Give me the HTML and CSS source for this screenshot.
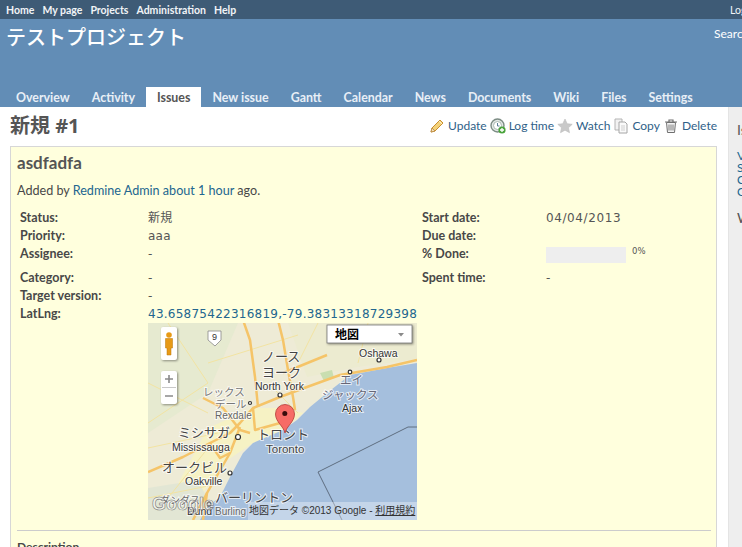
FILE: index.html
```html
<!DOCTYPE html>
<html lang="en">

<head>
    <meta charset="UTF-8">
    <title>新規 #1 - テストプロジェクト</title>
    <link rel="stylesheet" href="styles.css">
</head>

<body>
    <div id="top-menu">
        <ul class="top-links">
            <li>Home</li>
            <li>My page</li>
            <li>Projects</li>
            <li>Administration</li>
            <li>Help</li>
        </ul>
        <span class="account">Logged in as admin</span>
    </div>
    <div id="header">
        <div class="header-row">
            <h1>テストプロジェクト</h1>
            <span class="search">Search:</span>
        </div>
        <ul id="main-menu">
            <li>Overview</li>
            <li>Activity</li>
            <li class="active">Issues</li>
            <li>New issue</li>
            <li>Gantt</li>
            <li>Calendar</li>
            <li>News</li>
            <li>Documents</li>
            <li>Wiki</li>
            <li>Files</li>
            <li>Settings</li>
        </ul>
    </div>
    <div id="main">
        <div id="content">
            <div class="title-row">
                <h2>新規 #1</h2>
                <div class="contextual">
                    <a href="#">
                        <svg class="icon" viewBox="0 0 16 16">
                            <path d="M2 14l1-4 8-8 3 3-8 8z" fill="#f4d27a" stroke="#c98f2e" stroke-width="1" />
                            <path d="M2 14l1-4 3 3z" fill="#f6e3c0" stroke="#b9863c" stroke-width=".8" />
                            <path d="M10 3l3 3" stroke="#fff2c4" stroke-width="1" />
                        </svg>Update</a>
                    <a href="#">
                        <svg class="icon" viewBox="0 0 16 16">
                            <circle cx="7.5" cy="7.5" r="6.5" fill="#e4e9e6" stroke="#7c8c84" stroke-width="1.4" />
                            <circle cx="7.5" cy="7.5" r="4" fill="#fff" stroke="#a9b8b0" />
                            <path d="M7.5 5v3h2" fill="none" stroke="#5e7f95" />
                            <circle cx="12" cy="12" r="3.6" fill="#4aa43c" />
                            <path d="M10 12h4M12 10v4" stroke="#fff" stroke-width="1.3" />
                        </svg>Log time</a>
                    <a href="#">
                        <svg class="icon" viewBox="0 0 16 16">
                            <path d="M8 1l2.2 4.7 5 .6-3.7 3.4 1 5L8 12.2 3.500 14.700l1-5L.8 6.300l5-.6z" fill="#c9c9c9" stroke="#bdbdbd" stroke-width=".6" />
                        </svg>Watch</a>
                    <a href="#">
                        <svg class="icon" viewBox="0 0 16 16">
                            <path d="M2 1h7v11H2z" fill="#f2f2f2" stroke="#b4b4b4" />
                            <path d="M6 4h6l2 2v9H6z" fill="#fafafa" stroke="#a6a6a6" />
                            <path d="M8 8h4M8 10h4M8 12h4" stroke="#cfcfcf" />
                        </svg>Copy</a>
                    <a href="#">
                        <svg class="icon" viewBox="0 0 16 16">
                            <path d="M2 4h12M6 4V2h4v2" fill="none" stroke="#6f6f6f" stroke-width="1.200" />
                            <path d="M3.500 4.500l1 10h7l1-10z" fill="#f4f4f4" stroke="#6f6f6f" />
                            <path d="M6 6.500v6M8 6.500v6M10 6.500v6" stroke="#7d7d7d" />
                        </svg>Delete</a>
                </div>
            </div>
            <div class="issue">
                <h3>asdfadfa</h3>
                <p class="author">Added by <a href="#">Redmine Admin</a> <a href="#">about 1 hour</a> ago.</p>
                <div class="attributes">
                    <div class="label">Status:</div>
                    <div class="value">新規</div>
                    <div class="label">Start date:</div>
                    <div class="value date">04/04/2013</div>

                    <div class="label">Priority:</div>
                    <div class="value">aaa</div>
                    <div class="label">Due date:</div>
                    <div class="value"></div>

                    <div class="label">Assignee:</div>
                    <div class="value">-</div>
                    <div class="label">% Done:</div>
                    <div class="value progress">
                        <div class="bar"></div>
                        <span class="pct">0%</span>
                    </div>

                    <div class="label">Category:</div>
                    <div class="value">-</div>
                    <div class="label">Spent time:</div>
                    <div class="value">-</div>

                    <div class="label">Target version:</div>
                    <div class="value wide">-</div>

                    <div class="label">LatLng:</div>
                    <div class="value wide"><a href="#">43.65875422316819,-79.38313318729398</a></div>
                </div>
                <div class="map-row">
                    <svg class="map" viewBox="0 0 269 197">
                        <rect width="269" height="197" fill="#eeebd6" />
                        <!-- green patches -->
                        <path d="M0 0h90L60 70 0 110z" fill="#e6ead0" />
                        <path d="M140 0h129v36l-60 8-50 10z" fill="#ecebd0" />
                        <path d="M60 105l45-20 30 0 20 5-20 17-30 13-30 20-20 30-30 0z" fill="#f6f2c4" />
                        <path d="M172 50l12-3 2 8-10 3z" fill="#c9deb0" />
                        <path d="M0 165l50-8 10 20-8 20H0z" fill="#e2e6d4" />
                        <!-- minor roads -->
                        <g fill="none" stroke="#f2e3a2" stroke-width="1">
                            <path d="M0 60l60 30M20 0l40 60M60 40l90-28M170 0l-20 40M220 0l-10 40M0 100l60-40" />
                            <path d="M0 125l70-15M20 175l40-50M120 60l30 30M0 175l60-12" />
                        </g>
                        <!-- lake -->
                        <path d="M269 40L239 45 202 52 179 70 162 84 149 97 135 107 105 120 95 130 82 154 72 174 59 184 52 197H269z" fill="#a5bfdd" />
                        <path d="M269 104h-9l-90 45 24 48" fill="none" stroke="#5f6e80" stroke-width="1" />
                        <!-- highways -->
                        <g fill="none" stroke="#f5c468" stroke-width="2.500" stroke-linejoin="round">
                            <path d="M0 149L35 134 62 120 82 110 92 100 105 85 132 74 159 64 192 52 239 44 269 37" />
                            <path d="M95 -3L102 17 107 54 110 84" />
                            <path d="M130 -3L135 17 140 47 145 74 147 87" />
                            <path d="M55 75L75 85 92 107 102 110" />
                            <path d="M92 104L82 130 59 170 55 197" />
                            <path d="M105 85L107 107 132 100" />
                            <path d="M135 50L179 32" />
                            <path d="M62 120L72 135 82 130M45 197L59 170" />
                        </g>
                        <!-- shield -->
                        <path d="M60 8h13v9l-6 6-7-6z" fill="#fff" stroke="#888" stroke-width=".8" />
                        <text class="t-small" x="64" y="17">9</text>
                        <!-- place names -->
                        <g class="halo">
                            <text class="t-jp" x="114" y="38">ノース</text>
                            <text class="t-jp" x="114" y="54">ヨーク</text>
                            <text class="t-en" x="107" y="67">North York</text>
                            <text class="t-jp-soft" x="55" y="73">レックス</text>
                            <text class="t-jp-soft" x="67" y="85">デール</text>
                            <text class="t-en-soft" x="67" y="96">Rexdale</text>
                            <text class="t-jp" x="30" y="114">ミシサガ</text>
                            <text class="t-en" x="24" y="128">Mississauga</text>
                            <text class="t-jp" x="14" y="149">オークビル</text>
                            <text class="t-en" x="37" y="162">Oakville</text>
                            <text class="t-jp" x="109" y="116">トロント</text>
                            <text class="t-toronto" x="118" y="130">Toronto</text>
                            <text class="t-jp-lake" x="192" y="61">エイ</text>
                            <text class="t-jp-lake" x="174" y="76">ジャックス</text>
                            <text class="t-en" x="194" y="89">Ajax</text>
                            <text class="t-en" x="211" y="34">Oshawa</text>
                            <text class="t-jp" x="67" y="179">バーリントン</text>
                            <text class="t-en" x="39" y="192">Dund</text>
                            <text class="t-en-soft" x="67" y="192">Burling</text>
                            <text class="t-jp-small" x="12" y="181">ダンダス</text>
                        </g>
                        <!-- city dots -->
                        <g fill="#fff" stroke="#333" stroke-width="1.200">
                            <circle cx="90" cy="114" r="2.500" />
                            <circle cx="82" cy="150" r="2" />
                            <circle cx="132" cy="72" r="2" />
                            <circle cx="231" cy="37" r="2" />
                            <circle cx="202" cy="49" r="1.800" />
                            <circle cx="102" cy="80" r="1.500" />
                            <circle cx="61" cy="181" r="2" />
                        </g>
                        <!-- attribution -->
                        <rect x="100" y="179" width="169" height="18" fill="#fff" opacity=".35" />
                        <text class="t-attr" x="101" y="191">地図データ ©2013 Google - <tspan text-decoration="underline">利用規約</tspan></text>
                        <text class="t-google" x="4" y="187">Google</text>
                        <!-- marker -->
                        <path d="M137 110c-1.500-7-9.500-11-9.500-19a9.500 9.500 0 0 1 19 0c0 8-8 12-9.500 19z" fill="#f76c66" stroke="#b33a36" stroke-width=".8" />
                        <circle cx="136.800" cy="90.500" r="2.500" fill="#3a0d0c" />
                        <!-- pegman -->
                        <g class="ctl">
                            <rect x="13" y="4" width="16" height="33" rx="2" fill="#fff" />
                        </g>
                        <circle cx="21" cy="12" r="2.800" fill="#e79a16" />
                        <path d="M17.500 15.500h7v9.500h-1.500v7h-4v-7h-1.500z" fill="#e79a16" stroke="#b87608" stroke-width=".5" />
                        <!-- zoom -->
                        <g class="ctl">
                            <rect x="13" y="48" width="16" height="33" rx="2" fill="#fff" />
                        </g>
                        <path d="M14 64.500h14" stroke="#c8c8c8" />
                        <path d="M17 56h8M21 52v8M17 73h8" stroke="#8a8a8a" stroke-width="1.600" />
                        <!-- map type -->
                        <g class="ctl">
                            <rect x="179" y="2" width="85" height="18" fill="#fff" stroke="#777" stroke-width=".8" />
                        </g>
                        <text class="t-type" x="187" y="16">地図</text>
                        <path d="M250 10h6l-3 3.500z" fill="#8a8a8a" />
                    </svg>
                </div>
                <hr>
                <h4>Description</h4>
            </div>
        </div>
        <div id="sidebar">
            <h3>Issues</h3>
            <ul>
                <li>View all issues</li>
                <li>Summary</li>
                <li>Calendar</li>
                <li>Gantt</li>
            </ul>
            <h3>Watchers</h3>
        </div>
    </div>
</body>

</html>
```

FILE: styles.css
```css
* {
    margin: 0;
    padding: 0;
    list-style: none;
    box-sizing: border-box;
}

html,
body {
    height: 547px;
    overflow: hidden;
}

body {
    width: 742px;
    font-family: Lato, "Noto Sans CJK JP", sans-serif;
    font-size: 12.5px;
    color: #484848;
    background-color: #fff;
}

a {
    color: #22668f;
    text-decoration: none;
}

#top-menu {
    display: flex;
    align-items: center;
    width: 800px;
    height: 19px;
    padding-left: 6px;
    background-color: #3e5b76;
    color: #f1f4f7;
    font-size: 10.5px;
    font-weight: 700;
}

.top-links {
    display: flex;
    gap: 8px;
}

.account {
    margin-left: auto;
    width: 70px;
    white-space: nowrap;
    font-weight: 400;
}

#header {
    display: flex;
    flex-direction: column;
    justify-content: space-between;
    width: 742px;
    height: 88px;
    background-color: #628db6;
    color: #fff;
    overflow: hidden;
}

.header-row {
    display: flex;
    justify-content: space-between;
    padding: 3px 0 0 6px;
}

h1 {
    font-size: 20px;
    font-weight: 500;
    line-height: 30px;
    white-space: nowrap;
}

.search {
    width: 28px;
    margin-top: 4px;
    font-size: 12px;
    white-space: nowrap;
    overflow: hidden;
}

#main-menu {
    display: flex;
    padding-left: 5px;
    font-size: 12.4px;
    font-weight: 700;
    color: #e8eff6;
}

#main-menu li {
    height: 20px;
    line-height: 21px;
    padding: 0 11px;
    white-space: nowrap;
}

#main-menu li.active {
    background-color: #fff;
    color: #555;
}

#main {
    display: flex;
    height: 440px;
}

#content {
    width: 728px;
    flex-shrink: 0;
    padding: 0 11px 0 10px;
}

.title-row {
    display: flex;
    justify-content: space-between;
    align-items: center;
    height: 39px;
    padding-bottom: 4px;
}

h2 {
    font-family: "Open Sans", "Noto Sans CJK JP", sans-serif;
    font-size: 20px;
    font-weight: 700;
    color: #555;
    white-space: nowrap;
}

.contextual {
    display: flex;
    align-items: center;
    gap: 3px;
    margin: 2px 0 0;
    font-size: 12px;
}

.contextual a {
    display: flex;
    align-items: center;
    gap: 3px;
    color: #2f6188;
}

.icon {
    width: 16px;
    height: 16px;
}

.issue {
    height: 420px;
    padding: 5px 5px 4px 6px;
    background-color: #ffd;
    border: 1px solid #d7d7d7;
}

.issue h3 {
    font-size: 17px;
    font-weight: 700;
    line-height: 22px;
    color: #555;
}

.author {
    margin-top: 8px;
    line-height: 18px;
    font-size: 12.6px;
}

.attributes {
    display: grid;
    grid-template-columns: 128px 274px 124px 1fr;
    grid-template-rows: 18px 18px 18px 24px 18px 18px;
    align-items: end;
    margin: 9px 0 0 3px;
}

.label {
    font-weight: 700;
    line-height: 18px;
    white-space: nowrap;
}

.value {
    font-family: "DejaVu Sans", "Noto Sans CJK JP", sans-serif;
    font-size: 12px;
    line-height: 18px;
    letter-spacing: .25px;
    color: #555;
    white-space: nowrap;
}

.value.date {
    letter-spacing: .6px;
}

.wide {
    grid-column: 2 / 5;
}

.progress {
    display: flex;
    align-items: flex-start;
    gap: 6px;
    height: 18px;
}

.bar {
    width: 80px;
    height: 16px;
    margin-top: 2px;
    background-color: #eee;
}

.pct {
    font-size: 8.5px;
    line-height: 12px;
    letter-spacing: 0;
}

.map-row {
    display: flex;
    padding: 0 0 0 131px;
}

.map {
    display: block;
    width: 269px;
    height: 197px;
}

.halo text {
    paint-order: stroke;
    stroke: #fff;
    stroke-opacity: .7;
    stroke-width: 2px;
}

.t-jp {
    font-family: "Noto Sans CJK JP", sans-serif;
    font-size: 13px;
    fill: #444;
}

.t-jp-soft {
    font-family: "Noto Sans CJK JP", sans-serif;
    font-size: 10.5px;
    fill: #777;
}

.t-jp-lake {
    font-family: "Noto Sans CJK JP", sans-serif;
    font-size: 11.500px;
    fill: #667;
}

.t-jp-small {
    font-family: "Noto Sans CJK JP", sans-serif;
    font-size: 10px;
    fill: #666;
}

.t-en {
    font-family: "Liberation Sans", sans-serif;
    font-size: 10.5px;
    fill: #333;
}

.t-toronto {
    font-family: "Liberation Sans", sans-serif;
    font-size: 11.500px;
    fill: #444;
}

.t-en-soft {
    font-family: "Liberation Sans", sans-serif;
    font-size: 10px;
    fill: #666;
}

.t-small {
    font-family: "Liberation Sans", sans-serif;
    font-size: 9px;
    fill: #333;
}

.t-attr {
    font-family: "Liberation Sans", "Noto Sans CJK JP", sans-serif;
    font-size: 10px;
    fill: #333;
}

.t-google {
    font-family: "Liberation Sans", sans-serif;
    font-size: 18px;
    font-weight: 700;
    fill: rgba(255, 255, 255, .55);
    stroke: #777;
    stroke-width: .6px;
}

.t-type {
    font-family: "Noto Sans CJK JP", sans-serif;
    font-size: 12px;
    font-weight: 700;
    fill: #000;
}

.ctl {
    filter: drop-shadow(1px 1px 1px rgba(0, 0, 0, .4));
}

hr {
    height: 1px;
    margin-top: 10px;
    border: 0;
    background-color: #ccc;
}

.issue h4 {
    margin-top: 7px;
    font-size: 12px;
    font-weight: 700;
    line-height: 18px;
}

#sidebar {
    width: 200px;
    flex-shrink: 0;
    padding: 14px 0 0 8px;
    background-color: #eee;
    border-left: 1px solid #e4e4e4;
    white-space: nowrap;
}

#sidebar h3 {
    font-size: 14px;
    font-weight: 400;
    line-height: 18px;
    color: #555;
}

#sidebar ul {
    margin: 11px 0 11px;
    color: #22668f;
    font-size: 12px;
    line-height: 12px;
}
```
